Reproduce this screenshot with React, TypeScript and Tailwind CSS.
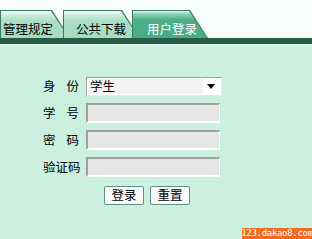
import React from 'react';

const tabs = [
  { label: '管理规定', width: 'w-[70px]', ml: 'ml-0', textPad: 'pl-[3px]', active: false },
  { label: '公共下载', width: 'w-[77px]', ml: '-ml-[7px]', textPad: 'pl-[13px]', active: false },
  { label: '用户登录', width: 'w-[76px]', ml: '-ml-[8px]', textPad: 'pl-[15px]', active: true },
];

function Tab({ label, width, ml, textPad, active }: (typeof tabs)[number]) {
  return (
    <div className={`relative h-[28px] ${width} ${ml}`}>
      {/* 탭 테두리 */}
      <div className="absolute inset-0 bg-[#3d7a62] [clip-path:polygon(0_0,calc(100%-18px)_0,100%_100%,0_100%)]" />
      {/* 탭 배경 */}
      <div
        className={`absolute left-[1px] top-[1px] right-[1px] bottom-0 [clip-path:polygon(0_0,calc(100%-18px)_0,100%_100%,0_100%)] ${
          active
            ? 'bg-[linear-gradient(#e4f6ee_0px,#8fd3b5_3px,#4cad8a_9px,#4aab88_100%)]'
            : 'bg-[linear-gradient(#f4fcf8_0px,#cdeedd_4px,#aadec6_10px,#a6dbc3_100%)]'
        }`}
      />
      <div
        className={`relative flex h-full items-end pb-[3px] ${textPad} text-[12.5px] leading-none ${
          active ? 'text-white' : 'text-black'
        }`}
      >
        {label}
      </div>
    </div>
  );
}

function Field({ label }: { label: string }) {
  return (
    <div className="flex items-center">
      <span className="flex w-[36px] justify-between text-[12.5px] leading-none text-black">
        {label.split('').map((c, i) => (
          <span key={i}>{c}</span>
        ))}
      </span>
      <div className="ml-[7px] h-[20px] w-[134px] border-t-2 border-l-2 border-r border-b-2 border-t-[#a0a0a0] border-l-[#a0a0a0] border-r-white border-b-white bg-[#e6e6e6]" />
    </div>
  );
}

export default function App() {
  return (
    <div
      className="relative h-[239px] w-[312px] overflow-hidden bg-[#cbf0e0]"
      style={{ fontFamily: '"Noto Sans CJK SC", "Liberation Sans", sans-serif' }}
    >
      {/* 상단 탭 영역 */}
      <div className="flex h-[38px] items-end bg-[#f6fdfa] pt-[10px]">
        {tabs.map((t) => (
          <Tab key={t.label} {...t} />
        ))}
      </div>
      <div className="h-[6px] bg-[#285c46]" />
      <div className="h-[2px] bg-[#d9f5ea]" />

      {/* 로그인 폼 */}
      <div className="flex flex-col gap-[7px] pl-[43px] pt-[31px]">
        <div className="flex items-center">
          <span className="flex w-[36px] justify-between text-[12.5px] leading-none text-black">
            <span>身</span>
            <span>份</span>
          </span>
          <div className="ml-[7px] flex h-[19px] w-[136px] items-center border border-t-[#a0a0a0] border-l-[#a0a0a0] border-r-[#e8e8e8] border-b-[#e8e8e8] bg-white px-[1px]">
            <div className="flex h-[15px] w-[115px] items-center bg-[#f2f2f2] pl-[2px] text-[12.5px] leading-none text-black">
              学生
            </div>
            <svg className="ml-auto mr-[5px]" width="8" height="5" viewBox="0 0 8 5">
              <path d="M0 0H8L4 5Z" fill="#000" />
            </svg>
          </div>
        </div>
        <Field label="学号" />
        <Field label="密码" />
        <Field label="验证码" />
      </div>

      <div className="mt-[9px] flex gap-[6px] pl-[104px]">
        <button className="flex h-[19px] w-[40px] items-center justify-center rounded-[2px] border border-[#5f9088] bg-[#fbfbfb] text-[12.5px] leading-none text-black">
          登录
        </button>
        <button className="flex h-[19px] w-[40px] items-center justify-center rounded-[2px] border border-[#5f9088] bg-[#fbfbfb] text-[12.5px] leading-none text-black">
          重置
        </button>
      </div>

      {/* 워터마크 */}
      <div className="absolute bottom-0 right-0 flex h-[11px] w-[70px] items-center justify-center bg-[#f26b22] text-[9px] leading-none tracking-[-0.3px] text-white [font-family:'DejaVu_Sans_Mono',monospace]">
        123.dakao8.com
      </div>
    </div>
  );
}
